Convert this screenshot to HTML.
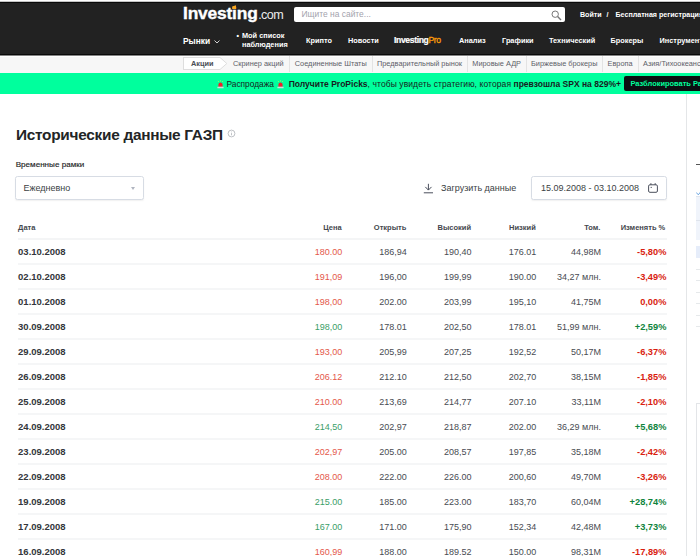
<!DOCTYPE html>
<html lang="ru"><head><meta charset="utf-8"><title>Исторические данные ГАЗП</title>
<style>
html,body{margin:0;padding:0;}
body{width:700px;height:556px;overflow:hidden;background:#fff;position:relative;font-family:"Liberation Sans",sans-serif;color:#232526;}
.abs{position:absolute;white-space:nowrap;}
#hdr{left:0;top:0;width:700px;height:55px;background:#222;border-bottom:1px solid #0a0a0a;box-sizing:border-box;}
#logo{left:183px;top:2.6px;color:#fff;font-weight:bold;font-size:17.4px;letter-spacing:-0.19px;line-height:21px;-webkit-text-stroke:0.35px #fff;}
#logo span{font-weight:normal;font-size:12.6px;letter-spacing:-0.6px;color:#ececec;-webkit-text-stroke:0;margin-left:0.5px;}
#logodot{left:232.2px;top:5.2px;width:3.9px;height:4.1px;background:#fba81c;clip-path:polygon(0 30%,100% 0,100% 100%,0 100%);}
#search{left:294px;top:6.5px;width:271px;height:15px;background:#fff;border-radius:2px;}
#search .ph{left:7.5px;top:1px;font-size:8.45px;color:#a3a3ad;line-height:13px;}
.top{color:#fff;font-weight:bold;font-size:7.1px;line-height:10px;top:9.5px;}
.nav{color:#fff;font-weight:bold;font-size:7.35px;line-height:10px;top:36px;}
#sub{left:0;top:55px;width:700px;height:18px;background:#f7f7f7;border-top:1px solid #848484;box-sizing:border-box;}
.sn{font-size:7.35px;color:#5d6068;top:59.2px;line-height:10px;}
.sep{top:56px;width:1px;height:16px;background:#e3e3e3;}
#banner{left:0;top:73px;width:700px;height:21px;background:#00ff9d;}
.bt{font-size:8.5px;top:78.5px;line-height:11px;color:#181c21;}
#unlock{left:624px;top:76px;width:90px;height:15px;background:#0c0f12;border-radius:2px;color:#00ff9d;font-weight:bold;font-size:7.45px;line-height:15px;padding-left:6.5px;box-sizing:border-box;}
h1{margin:0;left:16px;top:125px;font-size:15.4px;line-height:20px;font-weight:bold;color:#232526;letter-spacing:-0.28px;}
#tf{left:15.7px;top:159.5px;font-size:8.1px;line-height:10px;color:#232526;-webkit-text-stroke:0.15px #232526;}
.box{border:1px solid #d7dce4;border-radius:2.5px;box-sizing:border-box;background:#fff;box-shadow:0 1px 1.5px rgba(0,0,0,0.06);}
#sel{left:15px;top:176px;width:129px;height:24px;}
#sel .t{left:7.5px;top:6px;font-size:9px;line-height:11px;color:#3c3f45;}
#sel .a{left:114.5px;top:10px;width:0;height:0;border-left:2.5px solid transparent;border-right:2.5px solid transparent;border-top:3px solid #b0b5c0;}
#dl{left:441px;top:182.5px;font-size:9px;line-height:11px;color:#3c3f45;}
#date{left:531px;top:176px;width:136px;height:24px;}
#date .t{left:9px;top:6px;font-size:9px;line-height:11px;color:#3c3f45;}
table{position:absolute;left:17.7px;top:216px;width:648.9px;border-collapse:separate;border-spacing:0;table-layout:fixed;}
th{height:24px;font-size:7.5px;font-weight:bold;color:#45484e;text-align:right;padding:0.5px 0.5px 0 0;border-bottom:2px solid #f4f5f6;box-sizing:border-box;}
td{height:25px;font-size:9px;color:#484b52;text-align:right;padding:0 0 0 0;border-bottom:2px solid #f5f6f7;box-sizing:border-box;}
th:first-child,td:first-child{text-align:left;padding-left:0.4px;}
th:last-child{padding-right:1.3px;}td:last-child{padding-right:0.2px;}
td.d{font-weight:bold;color:#33363b;font-size:9.5px;}
td.c{font-weight:bold;font-size:9.25px;}
.r{color:#e4574a;} .g{color:#3a9e68;}
td.c.r{color:#d91e10;} td.c.g{color:#10843c;}
#side{left:686px;top:94px;width:1px;height:470px;background:#e4e6e8;}
</style></head><body>
<div id="hdr" class="abs"></div>
<div class="abs" style="left:0;top:0;width:700px;height:1px;background:#fff"></div><div class="abs" style="left:0;top:1px;width:700px;height:1px;background:#c4c4c4"></div><div class="abs" style="left:0;top:2px;width:700px;height:1px;background:#0a0a0a"></div>
<div id="logo" class="abs">Investing<span>.com</span></div>
<div id="logodot" class="abs"></div>
<div id="search" class="abs"><div class="ph abs">Ищите на сайте...</div>
<svg class="abs" style="left:257px;top:3px" width="11" height="11" viewBox="0 0 11 11"><circle cx="4.2" cy="4.2" r="3.2" fill="none" stroke="#777" stroke-width="1"/><path d="M6.6 6.6 L10 10" stroke="#777" stroke-width="1.4"/></svg></div>
<div class="top abs" style="left:580px">Войти</div>
<div class="top abs" style="left:606.5px">/</div>
<div class="top abs" style="left:615.5px">Бесплатная регистрация</div>

<div class="nav abs" style="left:183px;font-size:8.4px;top:36px">Рынки</div>
<svg class="abs" style="left:213.5px;top:39.5px" width="6" height="4" viewBox="0 0 6 4"><path d="M0.5 0.5 L3 3 L5.5 0.5" fill="none" stroke="#fff" stroke-width="0.8"/></svg>
<div class="nav abs" style="left:236.5px;top:31px;line-height:9px;">•</div>
<div class="nav abs" style="left:242px;top:31px;line-height:9px;">Мой список<br>наблюдения</div>
<div class="nav abs" style="left:306px">Крипто</div>
<div class="nav abs" style="left:348px">Новости</div>
<div class="nav abs" style="left:394px;top:34.9px;font-size:8.6px;letter-spacing:-0.36px;-webkit-text-stroke:0.2px #fff">Investing<span style="color:#ff9d0a;font-weight:normal;-webkit-text-stroke:0.3px #ff9d0a">Pro</span></div>
<div class="nav abs" style="left:459px">Анализ</div>
<div class="nav abs" style="left:502px">Графики</div>
<div class="nav abs" style="left:549px">Технический</div>
<div class="nav abs" style="left:610.5px">Брокеры</div>
<div class="nav abs" style="left:659.5px">Инструменты</div>

<div id="sub" class="abs"></div><div class="abs" style="left:0;top:56px;width:700px;height:1px;background:#fff"></div>
<div class="abs" style="left:183px;top:57px;width:37px;height:13px;background:#fff;border:1px solid #dedede;border-right:none;box-sizing:border-box;"></div>
<svg class="abs" style="left:219.5px;top:57px" width="8" height="13" viewBox="0 0 8 13"><path d="M0 0.5 L6.8 6.5 L0 12.5" fill="#fff" stroke="#dedede" stroke-width="1"/></svg>
<div class="sn abs" style="left:191px;font-weight:bold;color:#4a4d55">Акции</div>
<div class="sn abs" style="left:233px">Скринер акций</div>
<div class="sep abs" style="left:288.5px"></div>
<div class="sn abs" style="left:294.8px">Соединенные Штаты</div>
<div class="sep abs" style="left:372px"></div>
<div class="sn abs" style="left:377px">Предварительный рынок</div>
<div class="sep abs" style="left:467px"></div>
<div class="sn abs" style="left:472.3px">Мировые АДР</div>
<div class="sep abs" style="left:525.5px"></div>
<div class="sn abs" style="left:531px">Биржевые брокеры</div>
<div class="sep abs" style="left:602.3px"></div>
<div class="sn abs" style="left:607.5px">Европа</div>
<div class="sep abs" style="left:637.7px"></div>
<div class="sn abs" style="left:643px">Азия/Тихоокеанский</div>

<div id="banner" class="abs"></div>
<svg class="abs" style="left:216.6px;top:79.5px" width="7" height="9" viewBox="0 0 7 9"><path d="M1.4 6.8 V4.7 A2.1 2.3 0 0 1 5.6 4.7 V6.8 Z" fill="#f2202a"/><rect x="0.4" y="6.7" width="6.2" height="1.6" rx="0.3" fill="#d6dadd"/><path d="M1 0.9 L1.8 2 M6 0.9 L5.2 2 M3.5 0.3 V1.6" stroke="#c8f24a" stroke-width="0.7"/></svg>
<svg class="abs" style="left:277px;top:79.5px" width="7" height="9" viewBox="0 0 7 9"><path d="M1.4 6.8 V4.7 A2.1 2.3 0 0 1 5.6 4.7 V6.8 Z" fill="#f2202a"/><rect x="0.4" y="6.7" width="6.2" height="1.6" rx="0.3" fill="#d6dadd"/><path d="M1 0.9 L1.8 2 M6 0.9 L5.2 2 M3.5 0.3 V1.6" stroke="#c8f24a" stroke-width="0.7"/></svg>
<div class="bt abs" style="left:226.5px;font-size:8.35px">Распродажа</div>
<div class="bt abs" style="left:288.7px"><b>Получите ProPicks</b><span style="letter-spacing:0.09px">, чтобы увидеть стратегию, которая </span><b>превзошла SPX на 829%+</b></div>
<div id="unlock" class="abs">Разблокировать Рас</div>

<h1 class="abs">Исторические данные ГАЗП</h1>
<svg class="abs" style="left:226.9px;top:128.7px" width="9" height="9" viewBox="0 0 9 9"><circle cx="4.5" cy="4.5" r="3.4" fill="none" stroke="#a3a7ae" stroke-width="0.7"/><path d="M4.5 4.1 V6.3 M4.5 2.6 V3.3" stroke="#a3a7ae" stroke-width="0.7"/></svg>
<div id="tf" class="abs">Временные рамки</div>
<div id="sel" class="abs box"><div class="t abs">Ежедневно</div><div class="a abs"></div></div>
<svg class="abs" style="left:423px;top:182.5px" width="11" height="11" viewBox="0 0 11 11"><path d="M5.4 0.8 V7 M2.3 3.9 L5.4 7.1 L8.5 3.9 M0.8 9.8 H10" fill="none" stroke="#4a4f5c" stroke-width="1"/></svg>
<div id="dl" class="abs">Загрузить данные</div>
<div id="date" class="abs box"><div class="t abs">15.09.2008 - 03.10.2008</div>
<svg class="abs" style="left:115.7px;top:6.1px" width="10" height="10" viewBox="0 0 10 10"><rect x="0.6" y="1.8" width="8.8" height="7.5" rx="1.3" fill="none" stroke="#4a4f5c" stroke-width="1"/><path d="M2.9 0.3 V1.8 M7.2 0.3 V1.8" stroke="#4a4f5c" stroke-width="1.1"/><circle cx="3.2" cy="4.4" r="0.6" fill="#4a4f5c"/></svg></div>

<table>
<colgroup><col style="width:259.8px"><col style="width:64.7px"><col style="width:64.7px"><col style="width:64.7px"><col style="width:64.7px"><col style="width:64.7px"><col style="width:65.6px"></colgroup>
<tr><th>Дата</th><th>Цена</th><th>Открыть</th><th>Высокий</th><th>Низкий</th><th>Том.</th><th>Изменять %</th></tr>
<tr><td class="d">03.10.2008</td><td class="r">180.00</td><td>186,94</td><td>190,40</td><td>176.01</td><td>44,98M</td><td class="c r">-5,80%</td></tr>
<tr><td class="d">02.10.2008</td><td class="r">191,09</td><td>196,00</td><td>199,99</td><td>190.00</td><td>34,27 млн.</td><td class="c r">-3,49%</td></tr>
<tr><td class="d">01.10.2008</td><td class="r">198,00</td><td>202.00</td><td>203,99</td><td>195,10</td><td>41,75M</td><td class="c r">0,00%</td></tr>
<tr><td class="d">30.09.2008</td><td class="g">198,00</td><td>178.01</td><td>202,50</td><td>178.01</td><td>51,99 млн.</td><td class="c g">+2,59%</td></tr>
<tr><td class="d">29.09.2008</td><td class="r">193,00</td><td>205,99</td><td>207,25</td><td>192,52</td><td>50,17M</td><td class="c r">-6,37%</td></tr>
<tr><td class="d">26.09.2008</td><td class="r">206.12</td><td>212.10</td><td>212,50</td><td>202,70</td><td>38,15M</td><td class="c r">-1,85%</td></tr>
<tr><td class="d">25.09.2008</td><td class="r">210.00</td><td>213,69</td><td>214,77</td><td>207.10</td><td>33,11M</td><td class="c r">-2,10%</td></tr>
<tr><td class="d">24.09.2008</td><td class="g">214,50</td><td>202,97</td><td>218,87</td><td>202.00</td><td>36,29 млн.</td><td class="c g">+5,68%</td></tr>
<tr><td class="d">23.09.2008</td><td class="r">202,97</td><td>205.00</td><td>208,57</td><td>197,85</td><td>35,18M</td><td class="c r">-2,42%</td></tr>
<tr><td class="d">22.09.2008</td><td class="r">208.00</td><td>222.00</td><td>226.00</td><td>200,60</td><td>49,70M</td><td class="c r">-3,26%</td></tr>
<tr><td class="d">19.09.2008</td><td class="g">215.00</td><td>185.00</td><td>223.00</td><td>183,70</td><td>60,04M</td><td class="c g">+28,74%</td></tr>
<tr><td class="d">17.09.2008</td><td class="g">167.00</td><td>171.00</td><td>175,90</td><td>152,34</td><td>42,48M</td><td class="c g">+3,73%</td></tr>
<tr><td class="d">16.09.2008</td><td class="r">160,99</td><td>188.00</td><td>189.52</td><td>150.00</td><td>98,31M</td><td class="c r">-17,89%</td></tr>
<tr><td class="d">15.09.2008</td><td class="r">196,10</td><td>207.00</td><td>207,50</td><td>195.00</td><td>55,20M</td><td class="c r">-5,10%</td></tr>
</table>
<div id="side" class="abs"></div>
<div class="abs" style="left:696px;top:164px;width:4px;height:1px;background:#555"></div>
<svg class="abs" style="left:695.5px;top:191px" width="5" height="5" viewBox="0 0 5 5"><path d="M0.3 1.5 L2.3 3.8 L5 0.5" fill="none" stroke="#4a90d9" stroke-width="0.8"/></svg>
<div class="abs" style="left:696px;top:196px;width:4px;height:44px;background:#f0f4fb;border-top:1px solid #e1e6ee;box-sizing:border-box"></div>
<div class="abs" style="left:696px;top:220px;width:4px;height:1px;background:#dfe4ec"></div>
<div class="abs" style="left:696px;top:246px;width:4px;height:12px;background:#e6edfa"></div>
<div class="abs" style="left:696px;top:268.5px;width:4px;height:1px;background:#e6e9eb"></div>
<div class="abs" style="left:696px;top:280px;width:4px;height:1px;background:#e6e9eb"></div>
<div class="abs" style="left:696px;top:291.5px;width:4px;height:1px;background:#e6e9eb"></div>
<div class="abs" style="left:696px;top:303px;width:4px;height:1px;background:#e6e9eb"></div>
<div class="abs" style="left:696px;top:314.5px;width:4px;height:1px;background:#e6e9eb"></div>
<div class="abs" style="left:696px;top:326px;width:4px;height:1px;background:#e6e9eb"></div>
<div class="abs" style="left:695.5px;top:402.5px;width:10px;height:200px;border:1px solid #e3e5e8;box-sizing:border-box"></div>
</body></html>
